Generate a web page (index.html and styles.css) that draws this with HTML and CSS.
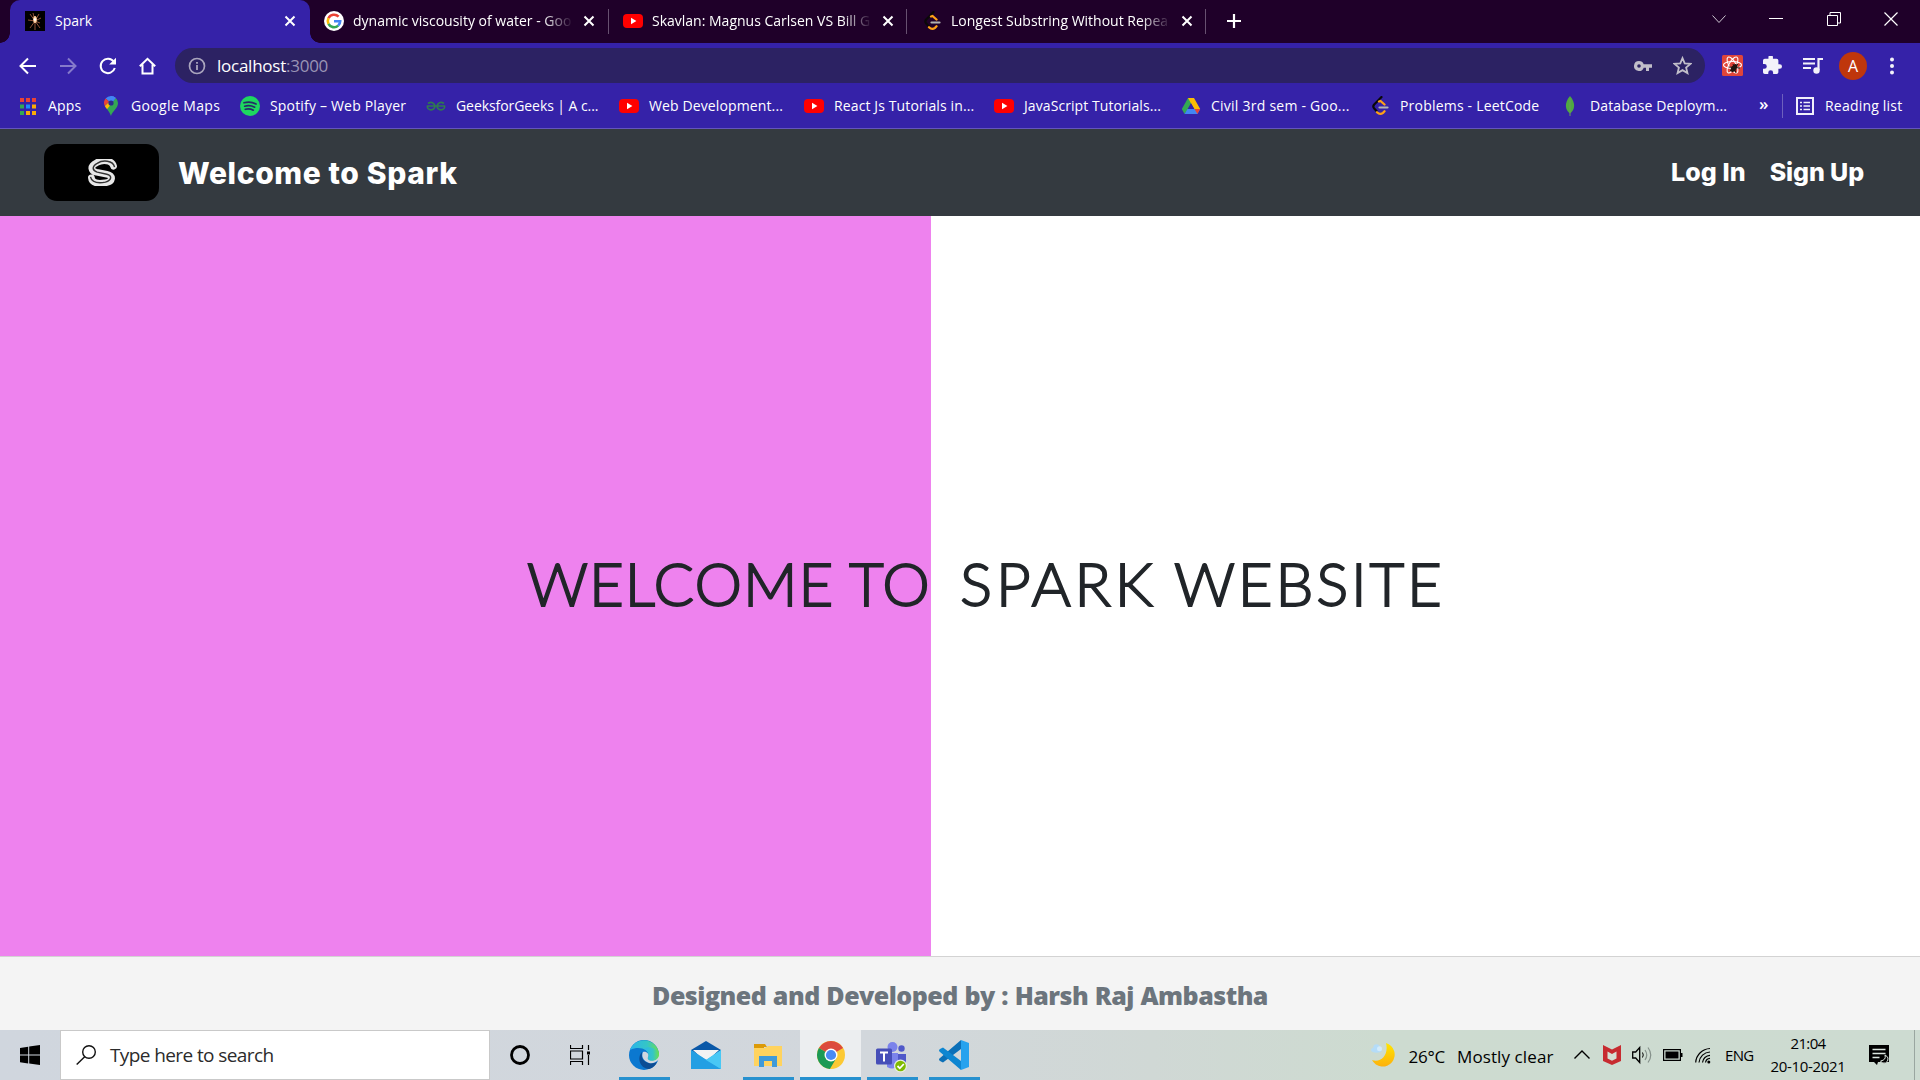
FILE: index.html
```html
<!DOCTYPE html>
<html lang="en">
<head>
<meta charset="utf-8">
<title>Spark</title>
<link rel="stylesheet" href="styles.css">
</head>
<body>
<svg class="defs" width="0" height="0">
  <defs>
    <symbol id="close" viewBox="0 0 12 12"><path d="M1.5 1.5l9 9M10.5 1.5l-9 9" stroke="#fff" stroke-width="2" fill="none"/></symbol>
    <symbol id="youtube" viewBox="0 0 20 20"><rect y="3" width="20" height="14" rx="4" fill="#f00"/><path d="M8 6.8v6.4l5.4-3.2z" fill="#fff"/></symbol>
    <symbol id="leetcode" viewBox="0 0 20 20"><path d="M11.5 1L4.2 8.6Q2.4 10.6 4.2 12.6L7 15.6" fill="none" stroke="#0a0808" stroke-width="2.2" stroke-linecap="round"/><path d="M9 5.5l1.5-.5 4 3.5M7 16.2q3 3 6 .6l1.500-1.500" fill="none" stroke="#ffa116" stroke-width="2.300" stroke-linecap="round"/><path d="M9.500 11.500h8" stroke="#b3b3b3" stroke-width="2.200" stroke-linecap="round"/></symbol>
  </defs>
</svg>

<header class="tabs">
  <div class="tab active">
    <svg class="fav" viewBox="0 0 20 20"><path fill="#000" d="M0 0h20v20H0z"/><path d="M10 10L5 3M10 10L8 2M10 10l4-7M10 10l6-3M10 10L3 9M10 10l-5 7M10 10l0 9M10 10l5 7M10 10l5 2" stroke="#a05a3c" stroke-width=".9"/><ellipse cx="10" cy="8.500" rx="1.800" ry="3.600" fill="#ffd0a0"/><circle cx="10" cy="8.500" r="1.200" fill="#fff"/></svg>
    <span class="label">Spark</span><svg class="x"><use href="#close"/></svg>
  </div>
  <div class="tab">
    <svg class="fav" viewBox="0 0 20 20"><circle cx="10" cy="10" r="10" fill="#fff"/><g fill="none" stroke-width="2.600"><path d="M14.600 5.700A6.200 6.200 0 0 0 4.500 7.200" stroke="#ea4335"/><path d="M4.500 7.200a6.200 6.200 0 0 0 0 5.600" stroke="#fbbc05"/><path d="M4.500 12.800a6.200 6.200 0 0 0 9.700 1.800" stroke="#34a853"/><path d="M14.200 14.600a6.200 6.200 0 0 0 2-4.300H10" stroke="#4285f4"/></g></svg>
    <span class="label fade">dynamic viscousity of water - Goo</span><svg class="x"><use href="#close"/></svg>
  </div>
  <div class="tab">
    <svg class="fav"><use href="#youtube"/></svg>
    <span class="label fade">Skavlan: Magnus Carlsen VS Bill G</span><svg class="x"><use href="#close"/></svg>
  </div>
  <div class="tab">
    <svg class="fav"><use href="#leetcode"/></svg>
    <span class="label fade">Longest Substring Without Repea</span><svg class="x"><use href="#close"/></svg>
  </div>
  <svg class="plus" viewBox="0 0 16 16"><path d="M8 1v14M1 8h14" stroke="#fff" stroke-width="2.200"/></svg>
  <div class="window-buttons">
    <svg viewBox="0 0 14 14"><path d="M.5 3.500L7 10.500 13.500 3.500" fill="none" stroke="#cfc8d2"/></svg>
    <svg viewBox="0 0 14 14"><path d="M0 6.500h14" stroke="#fff"/></svg>
    <svg viewBox="0 0 14 14"><path d="M.5 3.500h10v10H.5zM3 3.500V.5h10.500v10.500H11" fill="none" stroke="#fff"/></svg>
    <svg viewBox="0 0 14 14"><path d="M.5.5l13 13M13.500.5l-13 13" stroke="#fff" stroke-width="1.200"/></svg>
  </div>
</header>

<div class="toolbar">
  <nav class="history">
    <svg viewBox="0 0 20 20"><path d="M18 10H3M10 2.500L2.500 10l7.500 7.500" fill="none" stroke="#fff" stroke-width="2"/></svg>
    <svg class="dim" viewBox="0 0 20 20"><path d="M2 10h15M10 2.500l7.500 7.500-7.500 7.500" fill="none" stroke="#fff" stroke-width="2"/></svg>
    <svg viewBox="0 0 20 20"><path d="M15.800 5.800A7.200 7.200 0 1 0 16.800 12" fill="none" stroke="#fff" stroke-width="2"/><path d="M18 1.800v6.800h-6.800z" fill="#fff"/></svg>
    <svg viewBox="0 0 20 20"><path d="M1.800 10.200L9.500 2.800l7.700 7.400M4.500 8.500v9.100h10V8.500" fill="none" stroke="#fff" stroke-width="2"/></svg>
  </nav>
  <div class="address">
    <svg class="info" viewBox="0 0 18 18"><circle cx="9" cy="9" r="7.500" fill="none" stroke="#aaa5bd" stroke-width="1.700"/><path d="M9 8v5M9 5v1.800" stroke="#aaa5bd" stroke-width="1.800"/></svg>
    <span class="url">localhost<span>:3000</span></span>
    <svg class="key" viewBox="0 0 18 18"><path fill-rule="evenodd" d="M5 4a5 5 0 1 0 4.700 6.700H12V14h3v-3.300h3V7.300H9.700A5 5 0 0 0 5 4zm0 3.200a1.800 1.800 0 1 1 0 3.600 1.800 1.800 0 0 1 0-3.600z" fill="#c1bec9"/></svg>
    <svg class="star" viewBox="0 0 18 18"><path d="M9 2l2.100 5 5.400.4-4.100 3.500 1.300 5.300L9 13.400l-4.700 2.800 1.300-5.300L1.500 7.400 6.900 7z" fill="none" stroke="#c1bec9" stroke-width="1.700"/></svg>
  </div>
  <div class="extensions">
    <svg class="react" viewBox="0 0 21 21"><rect width="21" height="21" rx="1.500" fill="#e0453a"/><g fill="none" stroke="#fff" stroke-width="1.100"><ellipse cx="10.500" cy="10" rx="9" ry="3.500"/><ellipse cx="10.500" cy="10" rx="9" ry="3.500" transform="rotate(60 10.500 10)"/><ellipse cx="10.500" cy="10" rx="9" ry="3.500" transform="rotate(120 10.500 10)"/></g><ellipse cx="12" cy="13" rx="2.600" ry="4.500" transform="rotate(35 12 13)" fill="#20140f"/><path d="M7 12l11 1M8 16l8-7M14 18l-3-9" stroke="#20140f"/></svg>
    <svg class="puzzle" viewBox="2 2 21 21"><path d="M20.500 11H19V7a2 2 0 0 0-2-2h-4V3.500a2.500 2.500 0 0 0-5 0V5H4a2 2 0 0 0-2 2v3.800h1.500a2.700 2.700 0 0 1 0 5.400H2V20a2 2 0 0 0 2 2h3.800v-1.500a2.700 2.700 0 0 1 5.400 0V22H17a2 2 0 0 0 2-2v-4h1.500a2.500 2.500 0 0 0 0-5z" fill="#f3f2fa"/></svg>
    <svg class="music" viewBox="0 0 20 18"><path d="M0 2h12M0 6.500h12M0 11h8" stroke="#f3f2fa" stroke-width="2"/><path d="M15.500 13V2H20" fill="none" stroke="#f3f2fa" stroke-width="2.200"/><circle cx="13.500" cy="13.500" r="3.200" fill="#f3f2fa"/></svg>
    <span class="avatar">A</span>
    <svg class="dots" viewBox="0 0 4 18"><g fill="#f3f2fa"><circle cx="2" cy="2.500" r="2"/><circle cx="2" cy="9" r="2"/><circle cx="2" cy="15.500" r="2"/></g></svg>
  </div>
</div>

<div class="bookmarks">
  <a><svg viewBox="0 0 20 20"><path d="M2 2h4v4H2zM8 2h4v4H8zM14 2h4v4h-4z" fill="#ea4335"/><path d="M2 8.500h4v4H2zM2 15h4v4H2z" fill="#34a853"/><path d="M8 8.500h4v4H8z" fill="#1a8cff"/><path d="M14 8.500h4v4h-4zM8 15h4v4H8zM14 15h4v4h-4z" fill="#fbab05"/></svg><span class="t1">Apps</span></a>
  <a><svg viewBox="0 0 20 20"><path d="M10 0a7 7 0 0 0-5.400 2.500L10 7l4.800-5A7 7 0 0 0 10 0z" fill="#4285f4"/><path d="M4.600 2.500A7 7 0 0 0 3.800 10L8 5.500z" fill="#ea4335"/><path d="M3.800 10c.6 1.200 1.500 2.200 2.300 3.200L12.500 8 9 5z" fill="#fbbc04"/><path d="M14.800 2L6.100 13.200C8 15.500 9 17.500 10 20c1.200-5 7-7.500 7-13a7 7 0 0 0-2.200-5z" fill="#34a853"/><path d="M10 0a7 7 0 0 1 4.800 2L12 5.500 8 3z" fill="#4285f4"/><circle cx="10" cy="7" r="2.600" fill="#2c2b8c"/></svg><span class="t2">Google Maps</span></a>
  <a><svg viewBox="0 0 20 20"><circle cx="10" cy="10" r="10" fill="#1ed760"/><path d="M4 6.800c4-1.200 8.500-.8 12 1.200M4.700 10.200c3.300-1 7-.6 10 1M5.300 13.300c2.700-.7 5.600-.4 8 .9" fill="none" stroke="#252a66" stroke-width="1.700" stroke-linecap="round"/></svg><span class="t3">Spotify – Web Player</span></a>
  <a><svg viewBox="0 0 20 20"><path d="M2 7.500q3.500-2.500 6 .5 2 3-.5 5-3 2-5.500-.5-1-1.500-.5-2.500h17q.5 1-.5 2.500-2.500 2.500-5.500.5-2.500-2-.5-5 2.500-3 6-.5" fill="none" stroke="#2f7a50" stroke-width="1.700"/></svg><span class="t4">GeeksforGeeks | A c...</span></a>
  <a><svg><use href="#youtube"/></svg><span class="t5">Web Development...</span></a>
  <a><svg><use href="#youtube"/></svg><span class="t5">React Js Tutorials in...</span></a>
  <a><svg><use href="#youtube"/></svg><span>JavaScript Tutorials...</span></a>
  <a><svg viewBox="0 0 20 20"><path d="M7 2h6l-6.500 12L3.500 18 .8 13z" fill="#34a853"/><path d="M7 2h6l6.200 11h-6z" fill="#fbbc04"/><path d="M6.500 13h7l-2.700 5H3.600z" fill="#4285f4"/><path d="M12.500 13h6.700l-2.800 5H9.700z" fill="#4285f4"/><path d="M13.500 13h5.700l-2.800 5z" fill="#ea4335"/><path d="M10 7.200l3.300 5.800H6.700z" fill="#3522a8"/></svg><span class="t8">Civil 3rd sem - Goo...</span></a>
  <a><svg><use href="#leetcode"/></svg><span class="t9">Problems - LeetCode</span></a>
  <a><svg viewBox="0 0 20 20"><path d="M10 0c6 7 5 14 0 17.500C5 14 4 7 10 0z" fill="#4faa41"/><path d="M10 3v17" stroke="#6b9c5c" stroke-width="1"/></svg><span class="t5">Database Deploym...</span></a>
  <b>»</b>
  <a class="reading"><svg viewBox="0 0 20 20"><path d="M2 2h16v16H2z" fill="none" stroke="#f0effa" stroke-width="2"/><path d="M5 6.500h2M5 10h2M5 13.500h2M8.500 6.500H15M8.500 10H15M8.500 13.500H15" stroke="#f0effa" stroke-width="1.700"/></svg><span class="t9">Reading list</span></a>
</div>

<nav class="site-nav">
  <div class="logo"><svg viewBox="0 0 32 28"><path d="M27.500 7.500C26 1 16 .5 10 3.800 2.500 7.500 4 12.500 10 13.800L20.500 15.800C27.500 17 27 23.500 19 24.700 12 25.700 5 25.500 4.500 19.500" fill="none" stroke="#e8e8e8" stroke-width="7" stroke-linecap="round"/><path d="M28.500 8.500C27 1 16 .8 10.500 4.500 4.500 8 5.500 12 10.500 13.600L20.500 15.800C26 17 26 22 19 24 12 25.200 5 24.500 3.500 18.500" fill="none" stroke="#333" stroke-width="1.500"/></svg></div>
  <span class="brand">Welcome to Spark</span>
  <a class="login">Log In</a><a class="signup">Sign Up</a>
</nav>

<main class="split">
  <section class="left"><span class="w1">WELCOME</span><span class="w2">TO</span></section>
  <section class="right"><span class="w3">SPARK</span><span class="w4">WEBSITE</span></section>
</main>

<footer class="credit">Designed and Developed by : Harsh Raj Ambastha</footer>

<div class="taskbar">
  <div class="start"><svg viewBox="0 0 20 20"><path d="M0 2.900L8.200 1.700v7.800H0zM9.200 1.500L20 0v9.500H9.200zM0 10.500h8.200v7.900L0 17.200zM9.200 10.500H20V20L9.200 18.500z"/></svg></div>
  <div class="search"><svg viewBox="0 0 20 20"><circle cx="13" cy="7" r="6.300" fill="none" stroke="#111" stroke-width="1.400"/><path d="M8.700 11.700L.7 19.500" stroke="#111" stroke-width="1.400"/></svg><span>Type here to search</span></div>
  <div class="cell plain"><svg viewBox="0 0 20 20" width="20" height="20"><circle cx="10" cy="10" r="8.500" fill="none" stroke="#000" stroke-width="2.800"/></svg></div>
  <div class="cell view"><svg viewBox="0 0 20 20" width="20" height="20"><path d="M.5 0v3.500h12V0M.5 20v-3.500h12V20M.5 6h12v8H.5zM18.500 0v5M18.500 10v10" fill="none" stroke="#000" stroke-width="1.200"/><path d="M17 6.500h3v3h-3z"/></svg></div>
  <div class="cell open"><svg viewBox="0 0 30 30" width="30" height="30"><defs><linearGradient id="e1" x1="0" x2="1"><stop stop-color="#2bb5ea"/><stop offset=".6" stop-color="#35c6c5"/><stop offset="1" stop-color="#6be04d"/></linearGradient></defs><circle cx="15" cy="15" r="15" fill="#0b78d0"/><path d="M1 10A15 15 0 0 1 30 14c0 6-5 7.500-9 6.500-3-1-3-2-1.500-4C21 10 11 5 1 10z" fill="url(#e1)"/><path d="M13 12c-5 5-3 16 7 17 4-1 7-4 8-7-7 3-14 0-15-5-.3-2 0-3.500 0-5z" fill="#0c4d94"/><path d="M14 12c-2 4 0 9 6 11 4 .8 7-1 10-3.500V14c-1 6-6 7.500-10 6 -2-1-1-3-.5-4 .5-2-2-5-5.500-4z" fill="#d2d7df"/><path d="M19 7q11 1 11 8c-.5 5-6 6.500-9.500 5.200-2-1-1.500-2.700-1-3.700 1-4-2-6-4.500-7.500z" fill="url(#e1)"/></svg></div>
  <div class="cell"><svg viewBox="0 0 30 30" width="30" height="30"><path d="M0 10L15 1l15 9v5H0z" fill="#0a58a8"/><path d="M2 10h26L15 22z" fill="#f3f3f3"/><path d="M0 10l15 10 15-10v19H0z" fill="#36b8ee"/><path d="M0 10l30 19H0z" fill="#239fe3"/><path d="M15 20L30 10v19z" fill="#49c8f5"/><path d="M3 10h24l-12 9z" fill="#f3f3f3"/></svg></div>
  <div class="cell open"><svg viewBox="0 0 28 28" width="28" height="28"><path d="M0 3h11l2 3h-3v6H0z" fill="#dc9a08"/><path d="M0 7h11l3-2h14v20H0z" fill="#ffd35e"/><path d="M5 26V15h18v11h-5v-6h-8v6z" fill="#3f9ad9"/></svg></div>
  <div class="cell open current"><svg viewBox="0 0 28 28" width="28" height="28"><circle cx="14" cy="14" r="14" fill="#fcc934"/><path d="M14 14L1.900 7A14 14 0 0 1 26.100 7z" fill="#dc4a3d"/><path d="M14 14L1.900 7a14 14 0 0 0 11 21l6.500-11z" fill="#1c9a56"/><circle cx="14" cy="14" r="6.500" fill="#fff"/><circle cx="14" cy="14" r="5.100" fill="#4a8af4"/></svg></div>
  <div class="cell open teams"><svg viewBox="0 0 32 32" width="32" height="32"><circle cx="16.500" cy="6" r="5" fill="#7b83eb"/><circle cx="25.500" cy="7.500" r="3.200" fill="#5059c9"/><path d="M20 13h10v10q-3 5-8 3z" fill="#5059c9"/><path d="M11 12h11v12q-4 6-11 2z" fill="#7b83eb"/><rect y="7.500" width="16" height="16" rx="1.500" fill="#464eb8"/><path d="M4 11.500h8M8 11.500v9" stroke="#fff" stroke-width="2"/><circle cx="24.500" cy="25" r="6.500" fill="#e9efe0"/><circle cx="24.500" cy="25" r="5.300" fill="#7fba00"/><path d="M21.500 25l2.300 2.300 4-4.300" fill="none" stroke="#fff" stroke-width="1.800"/></svg></div>
  <div class="cell open"><svg viewBox="0 0 30 30" width="30" height="30"><path d="M22 0l8 3v24l-8 3z" fill="#26a2ee"/><path d="M22 0v9L4 22.500 1 21q-2-1.500 0-3z" fill="#0b70b8"/><path d="M22 30v-9L4 7.500 1 9q-2 1.500 0 3z" fill="#0d86d1"/></svg></div>
  <div class="tray">
    <svg class="moon" viewBox="0 0 24 24"><defs><linearGradient id="mn" x1="0" x2="0" y1="0" y2="1"><stop offset="0" stop-color="#ffe600"/><stop offset="1" stop-color="#fdb10e"/></linearGradient></defs><path d="M15 0a12 12 0 1 1-14 17C10 20 18 12 15 0z" fill="url(#mn)"/><g fill="#b4dcf8"><ellipse cx="5.500" cy="7" rx="5.500" ry="2.700"/><circle cx="5.500" cy="4.500" r="3.200"/><circle cx="8.500" cy="5.800" r="2.500" fill="#d3ebfb"/></g></svg>
    <span class="temp">26°C</span><span class="sky">Mostly clear</span>
    <svg class="up" viewBox="0 0 16 20"><path d="M.5 13.500L8 6l7.500 7.500" fill="none" stroke="#000" stroke-width="1.400"/></svg>
    <svg class="shield" viewBox="0 0 18 20"><path d="M0 0l9 4.500L18 0v16l-9 4-9-4z" fill="#c72b30"/><path d="M4.500 6.500L9 9l4.500-2.500v7L9 15.700l-4.500-2.200z" fill="#d5dfd4"/></svg>
    <svg class="speaker" viewBox="0 0 20 20"><path d="M.7 7h3l4-4.500v15L3.700 13h-3z" fill="none" stroke="#000" stroke-width="1.300"/><path d="M10.500 7.500q1.500 2.500 0 5" fill="none" stroke="#000"/><path d="M13 5q3.500 5 0 10M16 2.500q5.500 7.500 0 15" fill="none" stroke="#84908a" stroke-width="1.200"/></svg>
    <svg class="battery" viewBox="0 0 20 20"><path d="M.6 4.600h16.800v10.800H.6z" fill="none" stroke="#000" stroke-width="1.200"/><path d="M2.500 6.500h13v7h-13zM18 8h1.500v4H18z"/></svg>
    <svg class="wifi" viewBox="0 0 16 20"><g fill="none" stroke="#000" stroke-width="1.200"><path d="M.7 17.500A15 15 0 0 1 15 3.500"/><path d="M4 17.500A11.500 11.500 0 0 1 15 7"/><path d="M7.500 17.500A8 8 0 0 1 15 10.300"/><path d="M10.500 17.500A5 5 0 0 1 15 13.300"/></g><circle cx="13.800" cy="17" r="1.500"/></svg>
    <span class="lang">ENG</span>
    <div class="clock"><span class="time">21:04</span><span class="date">20-10-2021</span></div>
    <svg class="notice" viewBox="0 0 20 20"><path d="M0 0h20v17H9l-1 3-3-3H0z"/><path d="M3.500 4.500h13M3.500 8.500h13M3.500 12.500h7" stroke="#dce6df" stroke-width="1.400"/><path d="M16 10q1.500 5-4.500 6 1.500 3 5 2 3-1.500 2.500-5-.8-2-3-3z" stroke="#dce6df"/></svg>
    <div class="peek"></div>
  </div>
</div>
</body>
</html>
```
FILE: styles.css
```css
* { box-sizing: border-box; }
body {
  margin: 0;
  width: 1920px;
  height: 1080px;
  overflow: hidden;
  display: flex;
  flex-direction: column;
  background: #fff;
  font-family: "Open Sans", "Noto Sans", sans-serif;
}
svg { display: block; flex: none; }
.defs { display: none; }

/* tab strip */
.tabs {
  height: 43px;
  flex: none;
  display: flex;
  padding-left: 10px;
  background: #1f0029;
  color: #fff;
  font-size: 14px;
}
.tab {
  width: 298px;
  height: 41px;
  display: flex;
  align-items: center;
  padding-left: 14px;
  background: linear-gradient(#675170, #675170) right 9px / 1px 25px no-repeat;
}
.tab.active {
  position: relative;
  width: 300px;
  height: 43px;
  padding: 0 0 2px 15px;
  background: #3522a8;
  border-radius: 10px 10px 0 0;
}
.tab.active::before, .tab.active::after {
  content: "";
  position: absolute;
  bottom: 0;
  width: 10px;
  height: 10px;
}
.tab.active::before { left: -10px; background: radial-gradient(circle at 0 0, transparent 9.5px, #3522a8 10px); }
.tab.active::after { right: -10px; background: radial-gradient(circle at 100% 0, transparent 9.5px, #3522a8 10px); }
.tab:nth-child(2) { width: 299px; }
.tab:nth-child(4) { width: 299px; padding-left: 15px; }
.fav { width: 20px; height: 20px; }
.label { width: 220px; margin-left: 9px; white-space: nowrap; }
.active .label { margin-left: 10px; width: 228px; }
.fade { -webkit-mask-image: linear-gradient(90deg, #000 190px, transparent 220px); mask-image: linear-gradient(90deg, #000 190px, transparent 220px); }
.x { width: 12px; height: 12px; margin-left: 10px; }
.active .x { margin-left: 1px; }
.plus { width: 16px; height: 16px; margin: 13px 0 0 20px; }
.window-buttons { display: flex; gap: 43.5px; margin: 12px 22px 0 auto; }
.window-buttons svg { width: 14px; height: 14px; }

/* toolbar */
.toolbar { height: 42px; flex: none; display: flex; align-items: center; padding: 5px 0 2px; background: #3522a8; }
.history { display: flex; gap: 20px; padding-left: 18px; width: 175px; }
.history svg { width: 20px; height: 20px; }
.dim { opacity: .4; }
.address { width: 1530px; height: 35px; display: flex; align-items: center; padding: 0 13px; border-radius: 18px; background: #2c2263; }
.info { width: 18px; height: 18px; }
.url { margin: -1px auto 0 11px; font-size: 17px; letter-spacing: -.25px; color: #fff; }
.url span { color: #9a94b5; }
.key { width: 18px; height: 18px; margin-right: 21px; }
.star { width: 19px; height: 19px; }
.extensions { display: flex; align-items: center; padding-left: 17px; }
.react { width: 21px; height: 21px; }
.puzzle { width: 19px; height: 19px; margin-left: 20px; }
.music { width: 20px; height: 18px; margin-left: 21px; }
.avatar { width: 28px; height: 28px; margin-left: 16px; border-radius: 50%; background: #bf360c; color: #fff; font-size: 16px; line-height: 28px; text-align: center; }
.dots { width: 4px; height: 18px; margin-left: 23px; }

/* bookmarks */
.bookmarks {
  height: 44px;
  flex: none;
  display: grid;
  grid-template-columns: 83px 139px 186px 193px 185px 190px 187px 189px 190px 199px 23px 1fr;
  align-items: center;
  padding: 0 0 2px 18px;
  background: #3522a8;
  border-bottom: 1px solid #6455bd;
  color: #fff;
  font-size: 14px;
}
.bookmarks a { display: flex; align-items: center; gap: 10px; white-space: nowrap; }
.bookmarks svg { width: 20px; height: 20px; }
.bookmarks b { font-size: 17px; line-height: 20px; font-weight: 600; margin-top: -4px; }
.bookmarks .reading { height: 24px; padding-left: 12px; border-left: 1px solid #6d60bd; }
.bookmarks span { letter-spacing: .08px; }
.bookmarks .t1 { letter-spacing: .15px; }
.bookmarks .t2 { letter-spacing: .36px; }
.bookmarks .t3 { letter-spacing: .18px; }
.bookmarks .t4 { letter-spacing: -.07px; }
.bookmarks .t5 { letter-spacing: .12px; }
.bookmarks .t8 { letter-spacing: .24px; }
.bookmarks .t9 { letter-spacing: .2px; }

/* site navigation */
.site-nav { height: 87px; flex: none; display: flex; align-items: center; padding: 0 56px 0 44px; background: #343a40; color: #fff; font-family: Inter, sans-serif; font-weight: 800; }
.logo { width: 115px; height: 57px; display: grid; place-items: center; border-radius: 13px; background: #000; }
.logo svg { width: 31px; height: 27px; margin-left: 1px; }
.brand { margin: 0 auto 0 19px; font-size: 30px; letter-spacing: .62px; }
.login, .signup { font-size: 25px; letter-spacing: -.1px; padding-bottom: 2px; }
.login { letter-spacing: .1px; }
.signup { margin-left: 24px; }

/* split banner */
.split { height: 740px; flex: none; display: flex; font-family: Lato, sans-serif; font-weight: 300; font-size: 60px; line-height: 72px; color: #212529; -webkit-text-stroke: 1.8px #212529; }
.left, .right { display: flex; align-items: center; padding-bottom: 6px; }
.left { width: 931px; justify-content: flex-end; background: #ee82ee; }
.right { flex: 1; padding-left: 29px; }
.w1 { width: 322px; letter-spacing: 1px; }
.w2 { width: 82px; letter-spacing: 1px; }
.w3 { width: 214px; letter-spacing: 3.8px; }
.w4 { letter-spacing: 2.8px; }

.credit { height: 74px; flex: none; border-top: 1px solid #d3d3d3; background: #f4f4f4; color: #6c757d; font-size: 25px; font-weight: 800; letter-spacing: -.51px; word-spacing: .6px; line-height: 77px; text-align: center; }

/* taskbar */
.taskbar { height: 50px; flex: none; display: flex; background: linear-gradient(90deg, #d0d6de, #d2d7dc 45%, #d0d8d5 60%, #cddbd0 72%, #cddbd1); color: #000; }
.start { width: 60px; display: grid; place-items: center; }
.start svg { width: 20px; height: 20px; }
.search { width: 430px; height: 50px; display: flex; align-items: center; padding-left: 15px; background: #fff; border: 1px solid #c9c9c9; font-size: 19px; letter-spacing: -.6px; color: #2b2b2b; }
.search svg { width: 20px; height: 20px; }
.search span { margin-left: 14px; }
.cell { width: 62px; display: grid; place-items: center; }
.plain { width: 60px; }
.view { width: 60px; margin-right: 3px; }
.cell.open { background: linear-gradient(#2791cf, #2791cf) center bottom / 51px 3px no-repeat; }
.cell.current { background: linear-gradient(#2791cf, #2791cf) center bottom / 61px 3px no-repeat #eceef0; width: 61px; margin: 0 0 0 1px; }
.teams svg { margin-top: 3px; }
.tray { margin-left: auto; display: flex; align-items: center; }
.moon { width: 24px; height: 24px; }
.temp { width: 48.5px; margin-left: 14px; font-size: 17px; letter-spacing: -.25px; padding-top: 2px; }
.sky { width: 97px; font-size: 17px; padding-top: 2px; letter-spacing: .1px; }
.up { width: 16px; height: 20px; margin-left: 20px; }
.shield { width: 18px; height: 20px; margin-left: 13px; }
.speaker { width: 20px; height: 20px; margin-left: 11px; }
.battery { width: 20px; height: 20px; margin-left: 11px; }
.wifi { width: 16px; height: 20px; margin-left: 12px; }
.lang { width: 30px; margin-left: 14px; font-size: 15px; letter-spacing: -.7px; }
.clock { width: 78px; margin-left: 14px; display: flex; flex-direction: column; align-items: center; font-size: 15px; line-height: 23px; }
.time { letter-spacing: -.65px; }
.date { letter-spacing: -.33px; }
.notice { width: 20px; height: 20px; margin-left: 22px; }
.peek { width: 6px; height: 50px; margin-left: 25px; border-left: 1px solid #9aa6a0; }
```
